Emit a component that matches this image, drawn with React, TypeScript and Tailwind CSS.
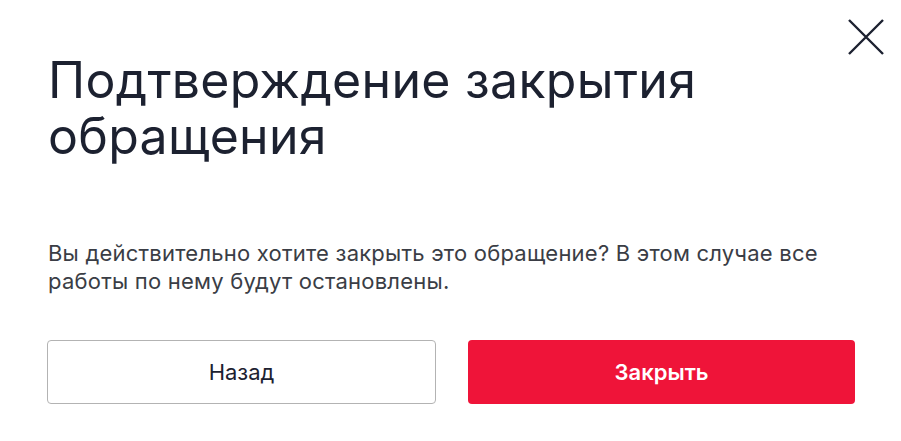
import React from "react";

const CloseIcon: React.FC = () => (
  <svg width="38" height="38" viewBox="0 0 38 38" fill="none">
    <path d="M2 2L36 36M36 2L2 36" stroke="#1c2130" strokeWidth="2.4" />
  </svg>
);

export default function App() {
  return (
    <div
      className="relative w-[901px] h-[441px] bg-white"
      style={{ fontFamily: "Inter, 'Noto Sans', sans-serif" }}
    >
      <button className="absolute right-[16px] top-[18px]" aria-label="Закрыть">
        <CloseIcon />
      </button>
      <div className="flex flex-col pl-[47px] pr-[46px] pt-[52px]">
        <h1 className="pl-[1px] text-[50px] leading-[56px] font-normal tracking-[0.3px] text-[#1c2130]">
          Подтверждение закрытия
          <br />
          обращения
        </h1>
        <p className="mt-[75px] pl-[1px] text-[22px] leading-[28px] tracking-[0.22px] text-[#3a3d45]">
          Вы действительно хотите закрыть это обращение? В этом случае все
          <br />
          работы по нему будут остановлены.
        </p>
        <div className="mt-[45px] flex gap-[32px]">
          <button className="h-[64px] flex-1 rounded-[4px] border border-[#b3b3b3] bg-white text-[22px] text-[#1c2130]">
            Назад
          </button>
          <button className="h-[64px] flex-1 rounded-[4px] bg-[#ef1439] text-[22px] font-semibold text-white">
            Закрыть
          </button>
        </div>
      </div>
    </div>
  );
}
